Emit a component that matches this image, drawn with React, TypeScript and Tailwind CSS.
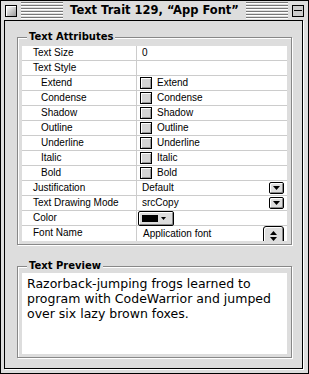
import React from 'react';

const ui = { fontFamily: '"Liberation Sans", Arial, sans-serif' };
const bold = { fontFamily: '"DejaVu Sans", sans-serif' };

function Stripes() {
  return (
    <div className="flex-1 flex flex-col gap-px py-[1px]">
      {[0, 1, 2, 3, 4, 5].map(i => (
        <div key={i} className="h-px bg-[#777] border-b border-white box-content" />
      ))}
    </div>
  );
}

function Checkbox() {
  return (
    <span className="w-[12px] h-[12px] border border-black bg-[#d4d4d4] shadow-[inset_1px_1px_0_#fff,inset_-1px_-1px_0_#999] shrink-0" />
  );
}

function ArrowButton() {
  return (
    <span className="ml-auto mr-[3px] w-[15px] h-[12px] border border-black rounded-[2px] bg-[#ddd] shadow-[inset_1px_1px_0_#fff,inset_-1px_-1px_0_#888] flex items-center justify-center">
      <svg width="7" height="4" viewBox="0 0 7 4"><path d="M0 0h7L3.5 4z" fill="#000" /></svg>
    </span>
  );
}

type Row = { label: string; indent?: boolean; value?: React.ReactNode };

const styles = ['Extend', 'Condense', 'Shadow', 'Outline', 'Underline', 'Italic', 'Bold'];

const rows: Row[] = [
  { label: 'Text Size', value: <span className="pl-[5px]">0</span> },
  { label: 'Text Style' },
  ...styles.map(s => ({
    label: s,
    indent: true,
    value: (
      <span className="flex items-center gap-[5px] pl-[3px]">
        <Checkbox />
        <span>{s}</span>
      </span>
    ),
  })),
  {
    label: 'Justification',
    value: (
      <span className="flex items-center w-full pl-[5px]">
        <span>Default</span>
        <ArrowButton />
      </span>
    ),
  },
  {
    label: 'Text Drawing Mode',
    value: (
      <span className="flex items-center w-full pl-[5px]">
        <span>srcCopy</span>
        <ArrowButton />
      </span>
    ),
  },
  {
    label: 'Color',
    value: (
      <span className="ml-[1px] w-[36px] h-[15px] border border-black rounded-[2px] bg-[#ddd] shadow-[inset_1px_1px_0_#fff,inset_-1px_-1px_0_#888] flex items-center pl-[3px] gap-[3px]">
        <span className="w-[16px] h-[7px] bg-black" />
        <svg width="5" height="3" viewBox="0 0 5 3"><path d="M0 0h5L2.5 3z" fill="#000" /></svg>
      </span>
    ),
  },
  {
    label: 'Font Name',
    value: (
      <span className="flex items-start w-full pl-[6px] h-full">
        <span className="mt-[1px]">Application font</span>
        <span className="ml-auto mr-[3px] w-[21px] h-[19px] shrink-0 border border-black rounded-[3px] bg-[#ddd] shadow-[inset_1px_1px_0_#fff,inset_-1px_-1px_0_#888] flex flex-col items-center justify-center gap-[2px]">
          <svg width="7" height="4" viewBox="0 0 7 4"><path d="M0 4h7L3.5 0z" fill="#000" /></svg>
          <svg width="7" height="4" viewBox="0 0 7 4"><path d="M0 0h7L3.5 4z" fill="#000" /></svg>
        </span>
      </span>
    ),
  },
];

function GroupBox({ title, children, className }: { title: string; children: React.ReactNode; className?: string }) {
  return (
    <div className={'relative border border-[#888] shadow-[1px_1px_0_#fff,inset_1px_1px_0_#fff] px-[4px] pb-[3px] ' + (className ?? '')}>
      <span
        className="absolute left-[9px] top-[-7px] px-[2px] bg-[#ddd] text-[10px] font-bold leading-[12px] text-black"
        style={bold}
      >
        {title}
      </span>
      {children}
    </div>
  );
}

export default function App() {
  return (
    <div className="w-[309px] h-[374px] bg-[#ddd] border border-black flex flex-col text-black">
      <div className="h-[19px] flex items-center px-[4px] gap-[4px] shrink-0">
        <span className="w-[12px] h-[12px] border border-black bg-[linear-gradient(135deg,#fff,#999)] shadow-[inset_1px_1px_0_#fff] shrink-0" />
        <Stripes />
        <span className="text-[11.5px] font-bold leading-none px-[3px] whitespace-nowrap" style={bold}>
          Text Trait 129, “App Font”
        </span>
        <Stripes />
        <span className="w-[12px] h-[12px] border border-black bg-[#ccc] flex flex-col justify-center shrink-0">
          <span className="h-px bg-black mx-[1px]" />
        </span>
      </div>
      <div className="flex-1 ml-[3px] mr-[5px] mb-[4px] border border-black shadow-[1px_1px_0_#fff] flex flex-col pl-[12px] pr-[10px] pt-[16px]">
        <GroupBox title="Text Attributes" className="pt-[8px]">
          <div className="bg-white overflow-hidden" style={ui}>
            {rows.map((r, i) => (
              <div
                key={r.label}
                className={
                  'grid grid-cols-[114px_1px_1fr] h-[15px] text-[10px] leading-[14px] ' +
                  (i < rows.length - 1 ? 'border-b border-[#ccc]' : '')
                }
              >
                <span className={(r.indent ? 'pl-[19px]' : 'pl-[11px]') + ' whitespace-nowrap'}>{r.label}</span>
                <span className="bg-[#ccc]" />
                <span className="flex items-center whitespace-nowrap">{r.value}</span>
              </div>
            ))}
          </div>
        </GroupBox>
        <GroupBox title="Text Preview" className="mt-[21px] pt-[6px]">
          <div
            className="bg-white h-[81px] px-[5px] pt-[3px] text-[12.5px] leading-[15px]"
            style={{ fontFamily: '"DejaVu Sans", sans-serif' }}
          >
            Razorback-jumping frogs learned to program with CodeWarrior and jumped over six lazy brown foxes.
          </div>
        </GroupBox>
      </div>
    </div>
  );
}
